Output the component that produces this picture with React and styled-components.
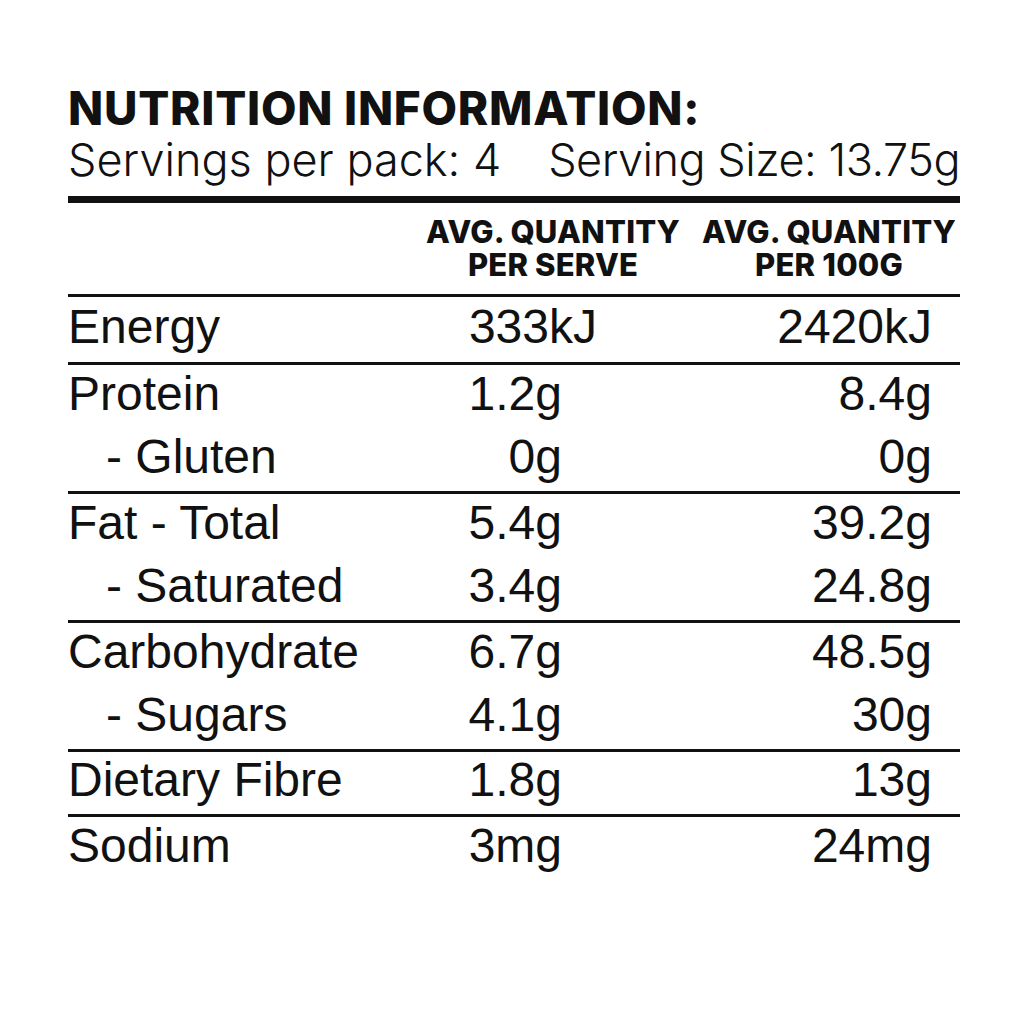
import React from 'react'
import styled, { createGlobalStyle } from 'styled-components'

const GlobalStyle = createGlobalStyle`
  html, body {
    margin: 0;
    padding: 0;
    background: #fff;
  }
  body {
    color: #111;
    font-family: "Liberation Sans", Arial, sans-serif;
  }
`

const Page = styled.div`
  width: 1024px;
  height: 1024px;
  box-sizing: border-box;
  padding: 80px 64px 0 68px;
`

const Title = styled.h1`
  margin: 0;
  font-family: Inter, "Noto Sans", sans-serif;
  font-weight: 800;
  font-size: 46px;
  line-height: 56px;
  letter-spacing: 0.75px;
`

const Servings = styled.div`
  display: flex;
  justify-content: space-between;
  font-family: Inter, "Noto Sans", sans-serif;
  font-weight: 300;
  font-size: 45px;
  line-height: 52px;
  margin-top: -2px;
`

const ServingPart = styled.span`
  letter-spacing: ${p => p.$tight ? '-0.5px' : '0'};
`

const Rule = styled.div`
  height: ${p => p.$thick ? '7px' : '3px'};
  background: #111;
  margin-top: ${p => p.$gap || 0}px;
`

const HeadRow = styled.div`
  display: grid;
  grid-template-columns: 1fr 262px 262px;
  column-gap: 14px;
  padding: 12px 0 13px;
`

const HeadCell = styled.div`
  grid-column: ${p => p.$col};
  text-align: center;
  font-family: Inter, "Noto Sans", sans-serif;
  font-weight: 800;
  font-size: 31px;
  line-height: 33px;
  letter-spacing: 0.2px;
`

const Group = styled.div`
  display: flex;
  flex-direction: column;
`

const Row = styled.div`
  display: grid;
  grid-template-columns: 354px 175px 1fr;
  align-items: center;
  box-sizing: border-box;
  height: ${p => p.$h}px;
  padding-bottom: 6px;
  font-size: 48px;
  line-height: 1;
`

const Label = styled.div`
  padding-left: ${p => p.$sub ? 38 : 0}px;
  white-space: nowrap;
`

const Value = styled.div`
  text-align: right;
  padding-right: ${p => p.$tail ?? 35}px;
  white-space: nowrap;
`

const groups = [
  { h: 65, rows: [{ name: 'Energy', serve: '333kJ', per: '2420kJ', tail: 0 }] },
  {
    h: 63,
    rows: [
      { name: 'Protein', serve: '1.2g', per: '8.4g' },
      { name: '- Gluten', serve: '0g', per: '0g', sub: true }
    ]
  },
  {
    h: 63,
    rows: [
      { name: 'Fat - Total', serve: '5.4g', per: '39.2g' },
      { name: '- Saturated', serve: '3.4g', per: '24.8g', sub: true }
    ]
  },
  {
    h: 63,
    rows: [
      { name: 'Carbohydrate', serve: '6.7g', per: '48.5g' },
      { name: '- Sugars', serve: '4.1g', per: '30g', sub: true }
    ]
  },
  { h: 62, rows: [{ name: 'Dietary Fibre', serve: '1.8g', per: '13g' }] },
  { h: 64, rows: [{ name: 'Sodium', serve: '3mg', per: '24mg' }] }
]

export default function App() {
  return (
    <Page>
      <GlobalStyle />
      <Title>NUTRITION INFORMATION:</Title>
      <Servings>
        <ServingPart>Servings per pack: 4</ServingPart>
        <ServingPart $tight>Serving Size: 13.75g</ServingPart>
      </Servings>
      <Rule $thick $gap={10} />
      <HeadRow>
        <HeadCell $col={2}>AVG. QUANTITY<br />PER SERVE</HeadCell>
        <HeadCell $col={3}>AVG. QUANTITY<br />PER 100G</HeadCell>
      </HeadRow>
      {groups.map((g, i) => (
        <React.Fragment key={i}>
          <Rule />
          <Group>
            {g.rows.map(r => (
              <Row key={r.name} $h={g.h}>
                <Label $sub={r.sub}>{r.name}</Label>
                <Value $tail={r.tail}>{r.serve}</Value>
                <Value $tail={28}>{r.per}</Value>
              </Row>
            ))}
          </Group>
        </React.Fragment>
      ))}
    </Page>
  )
}
